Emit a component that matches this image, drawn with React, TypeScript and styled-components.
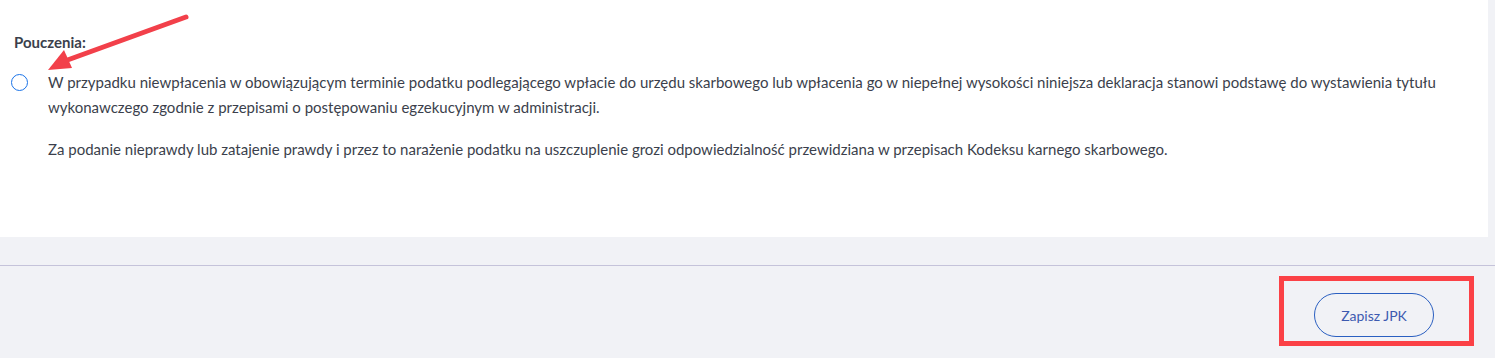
import React from "react";
import styled, { createGlobalStyle } from "styled-components";

const GlobalStyle = createGlobalStyle`
  html, body {
    margin: 0;
    padding: 0;
    background: #f1f2f6;
    font-family: Lato, "Noto Sans", sans-serif;
  }
`;

const Page = styled.div`
  position: relative;
  width: 1495px;
  height: 358px;
  overflow: hidden;
`;

const Card = styled.section`
  width: 1488px;
  height: 237px;
  box-sizing: border-box;
  background: #ffffff;
  padding: 33px 0 0 14px;
  color: #3b3f4c;
`;

const Title = styled.div`
  font-size: 15px;
  font-weight: 700;
  line-height: 18px;
  margin-bottom: 19px;
`;

const Row = styled.div`
  display: grid;
  grid-template-columns: 37px 1fr;
  margin-left: -3px;
`;

const Radio = styled.span`
  width: 15px;
  height: 15px;
  margin-top: 4px;
  border: 1.5px solid #1a73e8;
  border-radius: 50%;
`;

const Paragraphs = styled.div`
  font-size: 15px;
  line-height: 25px;
  padding-right: 20px;
`;

const Para = styled.p`
  margin: 0 0 17px;
`;

const Divider = styled.hr`
  margin: 28px 0 0;
  border: none;
  border-top: 1px solid #c5c3da;
`;

const Footer = styled.footer`
  display: flex;
  justify-content: flex-end;
  padding: 10px 21px 0 0;
`;

const Highlight = styled.div`
  border: 5px solid #fb4146;
  padding: 12px 35px 4px 30px;
`;

const Button = styled.button`
  display: block;
  width: 120px;
  height: 44px;
  border: 1px solid #2a5fc1;
  border-radius: 22px;
  background: transparent;
  color: #3d5ab0;
  font-family: inherit;
  font-size: 14px;
  cursor: pointer;
`;

const Arrow = styled.svg`
  position: absolute;
  left: 40px;
  top: 10px;
`;

const App = () => (
  <Page>
    <GlobalStyle />
    <Card>
      <Title>Pouczenia:</Title>
      <Row>
        <Radio />
        <Paragraphs>
          <Para>
            W przypadku niewpłacenia w obowiązującym terminie podatku podlegającego wpłacie do urzędu
            skarbowego lub wpłacenia go w niepełnej wysokości niniejsza deklaracja stanowi podstawę do
            wystawienia tytułu wykonawczego zgodnie z przepisami o postępowaniu egzekucyjnym w administracji.
          </Para>
          <Para>
            Za podanie nieprawdy lub zatajenie prawdy i przez to narażenie podatku na uszczuplenie grozi
            odpowiedzialność przewidziana w przepisach Kodeksu karnego skarbowego.
          </Para>
        </Paragraphs>
      </Row>
    </Card>
    <Divider />
    <Footer>
      <Highlight>
        <Button>Zapisz JPK</Button>
      </Highlight>
    </Footer>
    <Arrow width="160" height="70" viewBox="0 0 160 70">
      <line x1="146" y1="7" x2="22" y2="52" stroke="#f2404a" strokeWidth="5" strokeLinecap="round" />
      <polygon points="8,60 24,40 32,58" fill="#f2404a" />
    </Arrow>
  </Page>
);

export default App;
